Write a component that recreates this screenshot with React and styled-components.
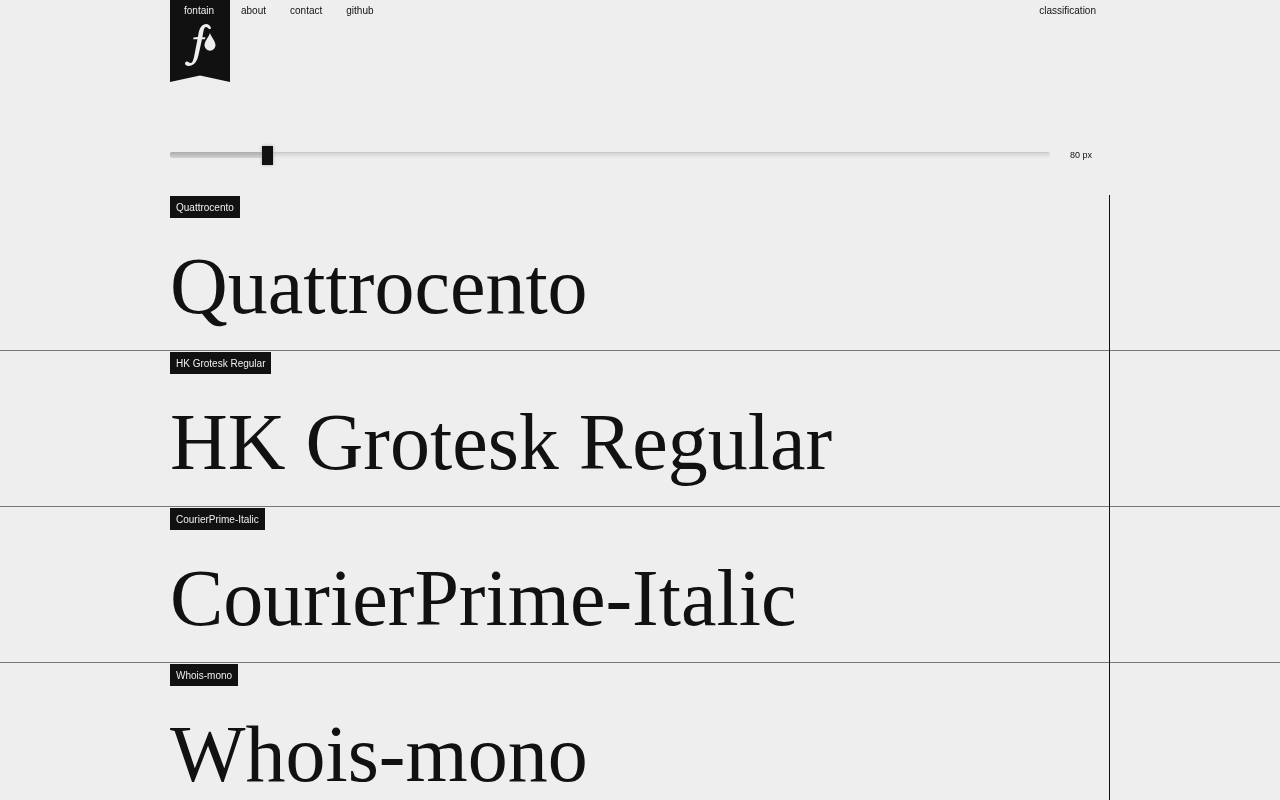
import React from 'react'
import styled, { createGlobalStyle } from 'styled-components'

const GlobalStyle = createGlobalStyle`
  html, body {
    margin: 0;
    padding: 0;
    height: 100%;
    overflow: hidden;
    background: #eeeeee;
    color: #111111;
    font-family: "Liberation Sans", Arial, sans-serif;
  }
`

const Page = styled.div`
  position: relative;
  height: 800px;
  overflow: hidden;
  will-change: transform;
`

const Header = styled.header`
  display: flex;
  height: 133px;
  padding-left: 170px;
`

const Ribbon = styled.div`
  width: 60px;
  height: 82px;
  flex: none;
  background: #111111;
  color: #eeeeee;
  text-align: center;
  clip-path: polygon(0 0, 100% 0, 100% 100%, 50% 92%, 0 100%);
`

const RibbonLabel = styled.div`
  padding-right: 2px;
  font-size: 10px;
  line-height: 21px;
`

const Logo = styled.svg`
  display: block;
`

const Nav = styled.nav`
  display: flex;
  flex: none;
  width: 866px;
  gap: 24px;
  padding-left: 11px;
  box-sizing: border-box;
`

const NavLink = styled.a`
  font-size: 10px;
  line-height: 21px;
  color: #111111;
  margin-left: ${(p) => (p.$push ? 'auto' : '0')};
`

const SliderRow = styled.div`
  display: flex;
  align-items: center;
  height: 44px;
  padding-left: 170px;
`

const Track = styled.div`
  position: relative;
  width: 880px;
  height: 6px;
  border-radius: 2px;
  background: linear-gradient(#c2c2c2 0, #d8d8d8 25%, #ececec 100%);
`

const Fill = styled.div`
  height: 100%;
  border-radius: 2px 0 0 2px;
  background: linear-gradient(#acacac, #d2d2d2);
`

const Thumb = styled.div`
  position: absolute;
  top: -6px;
  width: 11px;
  height: 19px;
  background: #111111;
  box-shadow: 0 0 3px #aaaaaa;
`

const SizeLabel = styled.span`
  margin-left: 20px;
  font-size: 9px;
  color: #111111;
`

const FontList = styled.main`
  display: flex;
  flex-direction: column;
  margin-top: 18px;
`

const FontRow = styled.section`
  height: 156px;
  flex: none;
  box-sizing: border-box;
  padding: 1px 0 0 170px;
  border-bottom: 1px solid #777777;
`

const Tag = styled.span`
  display: inline-block;
  height: 22px;
  padding: 0 6px;
  background: #111111;
  color: #eeeeee;
  font-size: 10px;
  line-height: 23px;
  vertical-align: top;
`

const Sample = styled.div`
  margin-top: 22px;
  font-family: "Liberation Serif", "Times New Roman", serif;
  font-size: 80px;
  line-height: 92px;
  white-space: nowrap;
  color: #111111;
`

const Rule = styled.div`
  position: absolute;
  left: 1109px;
  top: 195px;
  bottom: 0;
  width: 1px;
  background: #111111;
`

const fonts = ['Quattrocento', 'HK Grotesk Regular', 'CourierPrime-Italic', 'Whois-mono']

const App = () => {
  const value = 10.45
  return (
    <Page>
      <GlobalStyle />
      <Header>
        <Ribbon>
          <RibbonLabel>fontain</RibbonLabel>
          <Logo width="60" height="50" viewBox="0 21 60 50">
            <path
              d="M41 28C40 25 38 24 36.500 24C32 24 29.500 28 28.500 33.500L27.900 37L23.500 37.500L23.200 39.200L27.500 39.200L24 57C23 61.500 22 63 20.500 63C19 63 18.500 61.500 16.800 61.500C15.500 61.500 15 62.500 15 63.500C15 65 16.500 66 18.500 66C23.500 66 27 62 28.500 55L32 39.200L35 39.200L35.400 37.200L32.400 37.200L33.300 32C34 28.500 34.500 27 36 27C37.500 27 38 28.500 39.200 29C40.200 29.200 41 28.800 41 28Z"
              fill="#eeeeee"
            />
            <path d="M40 33C41.500 37.500 45.500 41 45.500 45.200A5.500 5.500 0 0 1 34.500 45.200C34.500 41 38.500 37.500 40 33Z" fill="#eeeeee" />
          </Logo>
        </Ribbon>
        <Nav>
          <NavLink>about</NavLink>
          <NavLink>contact</NavLink>
          <NavLink>github</NavLink>
          <NavLink $push>classification</NavLink>
        </Nav>
      </Header>
      <SliderRow>
        <Track>
          <Fill style={{ width: `${value}%` }} />
          <Thumb style={{ left: `${value}%` }} />
        </Track>
        <SizeLabel>80 px</SizeLabel>
      </SliderRow>
      <FontList>
        {fonts.map((name) => (
          <FontRow key={name}>
            <Tag>{name}</Tag>
            <Sample>{name}</Sample>
          </FontRow>
        ))}
      </FontList>
      <Rule />
    </Page>
  )
}

export default App
